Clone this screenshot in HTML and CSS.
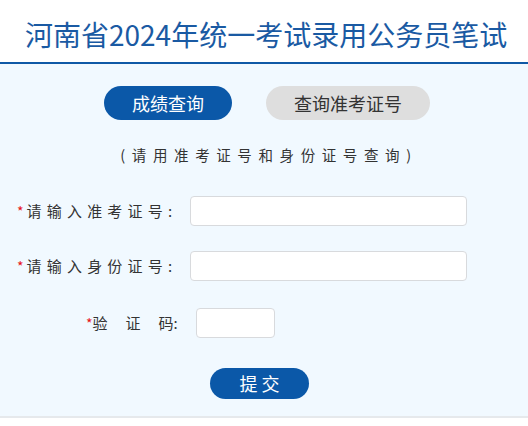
FILE: index.html
```html
<!DOCTYPE html>
<html lang="zh-CN">
<head>
<meta charset="utf-8">
<title>河南省2024年统一考试录用公务员笔试</title>
<link rel="stylesheet" href="styles.css">
</head>
<body>
<header class="header">
  <h1 class="title">河南省2024年统一考试录用公务员笔试</h1>
</header>
<main class="panel">
  <div class="tabs">
    <button class="tab tab-active">成绩查询</button>
    <button class="tab tab-gray">查询准考证号</button>
  </div>
  <p class="hint">(请用准考证号和身份证号查询)</p>
  <form class="form">
    <div class="row row-1">
      <label class="label"><span class="star">*</span>请输入准考证号:</label>
      <input class="input input-wide" type="text">
    </div>
    <div class="row row-2">
      <label class="label"><span class="star">*</span>请输入身份证号:</label>
      <input class="input input-wide" type="text">
    </div>
    <div class="row row-3">
      <label class="label label-code"><span class="star">*</span>验<span class="gap"></span>证<span class="gap"></span>码:</label>
      <input class="input input-code" type="text">
    </div>
    <div class="submit-row">
      <button class="submit" type="button">提交</button>
    </div>
  </form>
</main>
<div class="footer"></div>
</body>
</html>
```
FILE: styles.css
```css
* { box-sizing: border-box; }
html, body {
  margin: 0;
  padding: 0;
  background: #ffffff;
  font-family: "Noto Sans CJK SC", "Noto Sans", sans-serif;
}
.header {
  height: 64px;
  border-bottom: 2px solid #0f59a6;
  display: flex;
  align-items: center;
  padding-left: 25px;
}
.title {
  margin: 0;
  font-size: 28px;
  font-weight: normal;
  color: #1a5aa3;
  line-height: 1;
  letter-spacing: 0;
  position: relative;
  top: 3px;
}
.panel {
  background: #f1f9ff;
  height: 354px;
  border-bottom: 2px solid #e6e9ec;
  padding-top: 22px;
}
.tabs {
  display: flex;
  justify-content: center;
  gap: 34px;
  padding-left: 6px;
}
.tab {
  height: 34px;
  border: none;
  border-radius: 17px;
  font-family: inherit;
  font-size: 18px;
  line-height: 34px;
  padding: 0;
}
.tab-active {
  width: 128px;
  background: #0b58a8;
  color: #ffffff;
}
.tab-gray {
  width: 164px;
  background: #dedede;
  color: #333333;
}
.hint {
  margin: 19px 0 0;
  text-align: center;
  font-size: 14.5px;
  letter-spacing: 6.6px;
  line-height: 32px;
  color: #333;
  padding-left: 10px;
}
.form { margin-top: 25px; }
.row {
  display: flex;
  align-items: center;
  height: 29px;
}
.row-1 { padding-left: 17px; }
.row-2 { padding-left: 17px; margin-top: 26px; }
.row-3 { padding-left: 86px; margin-top: 28px; }
.label {
  font-size: 15px;
  color: #333;
  letter-spacing: 5.2px;
  width: 173px;
  white-space: nowrap;
}
.label-code {
  width: 110px;
  letter-spacing: 0;
}
.gap { display: inline-block; width: 18px; }
.star {
  color: #e8141a;
  font-size: 14px;
  letter-spacing: 3px;
}
.label-code .star { letter-spacing: 0; }
.input {
  height: 30px;
  background: #ffffff;
  border: 1px solid #d8dadd;
  border-radius: 4px;
  outline: none;
}
.input-wide { width: 277px; }
.input-code { width: 79px; }
.submit-row {
  display: flex;
  justify-content: flex-start;
  padding-left: 210px;
  margin-top: 31px;
}
.submit {
  width: 99px;
  height: 31px;
  border: none;
  border-radius: 16px;
  background: #0b58a8;
  color: #ffffff;
  font-family: inherit;
  font-size: 18px;
  line-height: 31px;
  letter-spacing: 4px;
  padding: 0 0 0 4px;
}
.footer { height: 6px; background: #ffffff; }
```
